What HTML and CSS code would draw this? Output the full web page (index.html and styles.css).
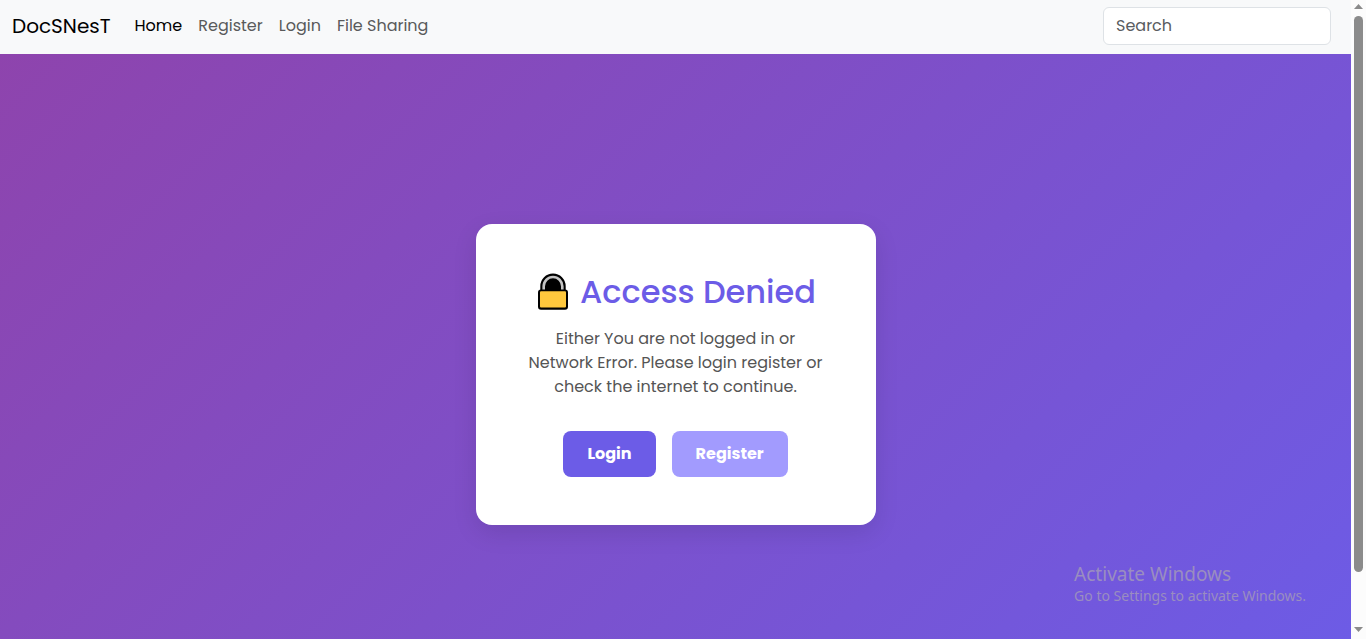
FILE: index.html
```html
<!DOCTYPE html>
<html lang="en">
<head>
<meta charset="utf-8">
<meta name="viewport" content="width=device-width, initial-scale=1">
<title>DocSNesT</title>
<link rel="stylesheet" href="styles.css">
</head>
<body>
<div class="window">
  <div class="page">
    <header class="navbar">
      <a class="brand" href="#">DocSNesT</a>
      <nav class="links">
        <a class="link link-active" href="#">Home</a>
        <a class="link" href="#">Register</a>
        <a class="link" href="#">Login</a>
        <a class="link" href="#">File Sharing</a>
      </nav>
      <form class="search-form">
        <input class="search" type="search" placeholder="Search" aria-label="Search">
      </form>
    </header>
    <main class="stage">
      <section class="card">
        <h1 class="title">
          <svg class="lock" viewBox="0 0 32 38" aria-hidden="true">
            <path d="M3.300 19V13.200a12.700 12.700 0 0 1 25.400 0V19z" fill="#000"/>
            <path d="M6.700 19v-5.700a9.300 9.300 0 0 1 18.600 0V19" fill="none" stroke="#c4c4c4" stroke-width="2.600"/>
            <rect x="1" y="16.500" width="30" height="20.300" rx="3" fill="#000"/>
            <rect x="3" y="18.300" width="26" height="16.300" rx="1" fill="#ffc83d"/>
          </svg>
          <span>Access Denied</span>
        </h1>
        <p class="message">Either You are not logged in or Network Error. Please login register or check the internet to continue.</p>
        <div class="actions">
          <button class="button" type="button">Login</button>
          <button class="button button-light" type="button">Register</button>
        </div>
      </section>
    </main>
  </div>
  <div class="scrollbar" aria-hidden="true">
    <svg class="arrow" viewBox="0 0 9 5"><path d="M4.500 0L9 5H0z"/></svg>
    <div class="track"><div class="thumb"></div></div>
    <svg class="arrow" viewBox="0 0 9 5"><path d="M4.500 5L9 0H0z"/></svg>
  </div>
  <aside class="watermark">
    <div class="watermark-title">Activate Windows</div>
    <div class="watermark-text">Go to Settings to activate Windows.</div>
  </aside>
</div>
</body>
</html>
```
FILE: styles.css
```css
* {
  box-sizing: border-box;
}

body {
  margin: 0;
  font-family: Poppins, Inter, sans-serif;
  font-size: 16px;
  line-height: 24px;
}

.window {
  position: relative;
  display: flex;
  height: 100vh;
  overflow: hidden;
}

.page {
  flex: 1;
  min-width: 0;
  overflow: hidden;
}

.navbar {
  display: flex;
  align-items: center;
  padding: 7px 20px 9px 12px;
  background: #f8f9fa;
}

.brand {
  margin-right: 16px;
  color: #000;
  font-size: 20px;
  line-height: 30px;
  text-decoration: none;
}

.links {
  display: flex;
  flex: 1;
}

.link {
  padding: 0 8px;
  color: #595a5b;
  text-decoration: none;
  white-space: nowrap;
}

.link-active {
  color: #000;
}

.search {
  display: block;
  width: 228px;
  height: 38px;
  padding: 5px 12px 7px;
  border: 1px solid #dee2e6;
  border-radius: 6px;
  background: #fff;
  color: #212529;
  font: inherit;
  appearance: none;
}

.search::placeholder {
  color: #595c5f;
  opacity: 1;
}

.stage {
  display: flex;
  align-items: center;
  justify-content: center;
  min-height: 100vh;
  padding: 18px 16px 16px;
  background: linear-gradient(135deg, #8e44ad, #6c5ce7);
}

.card {
  width: 400px;
  max-width: 100%;
  padding: 48px;
  border-radius: 16px;
  background: #fff;
  box-shadow: 0 8px 24px rgba(0, 0, 0, 0.1);
  text-align: center;
}

.title {
  display: flex;
  align-items: center;
  justify-content: center;
  gap: 11px;
  margin: 0 0 16px;
  padding-left: 2px;
  color: #6c5ce7;
  font-size: 32px;
  font-weight: 500;
  line-height: 39px;
  white-space: nowrap;
}

.lock {
  width: 32px;
  height: 38px;
}

.message {
  margin: 0 0 32px;
  color: #555;
}

.actions {
  display: flex;
  justify-content: center;
  gap: 16px;
}

.button {
  padding: 11px 24px;
  border: 0;
  border-radius: 8px;
  background: #6c5ce7;
  color: #fff;
  font: inherit;
  font-weight: 700;
}

.button-light {
  background: #a29bfe;
}

.scrollbar {
  display: flex;
  flex-direction: column;
  align-items: center;
  gap: 7px;
  width: 15px;
  padding: 4px 0 7px;
  background: #fcfcfc;
}

.arrow {
  width: 9px;
  height: 5px;
  fill: #8b8b8b;
}

.track {
  flex: 1;
}

.thumb {
  width: 9px;
  height: 92%;
  border-radius: 5px;
  background: #8b8b8b;
}

.watermark {
  position: absolute;
  right: 60px;
  bottom: 33px;
  color: #9a8dc0;
  font-family: "Segoe UI", "Noto Sans", sans-serif;
}

.watermark-title {
  font-size: 19px;
}

.watermark-text {
  font-size: 14px;
  line-height: 20px;
}
```
